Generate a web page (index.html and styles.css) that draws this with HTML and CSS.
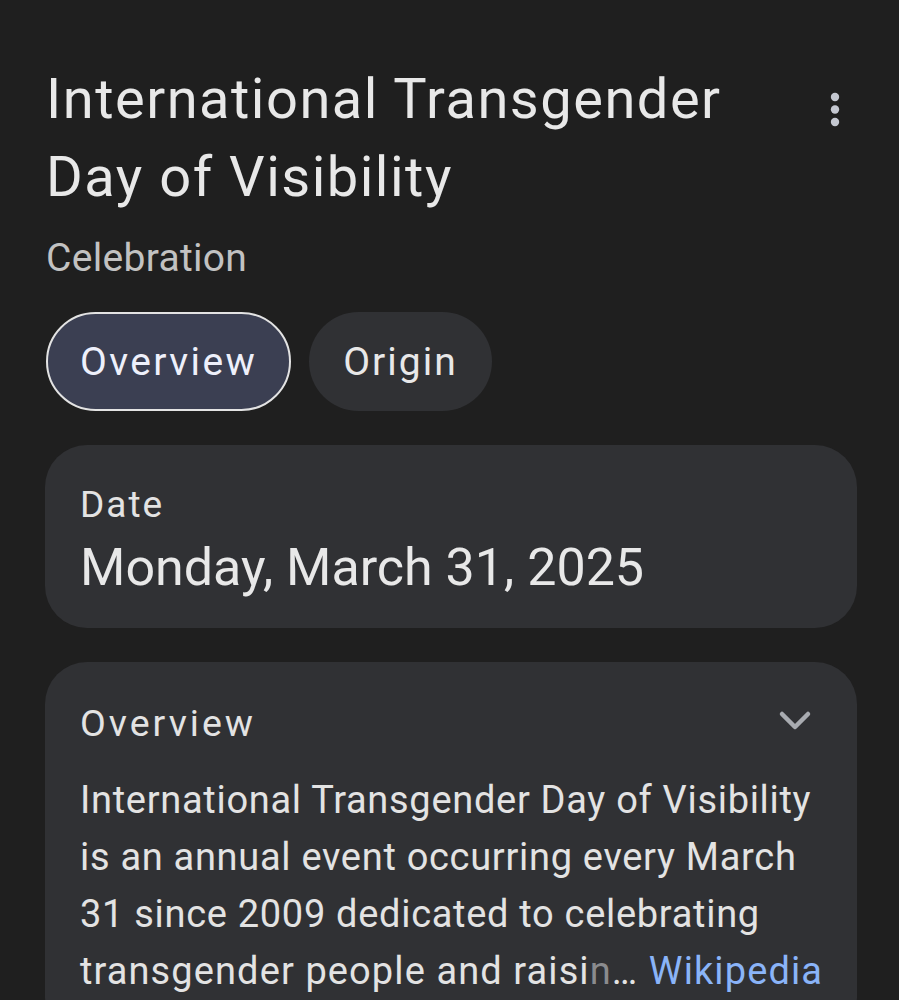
FILE: index.html
```html
<!DOCTYPE html>
<html lang="en">
<head>
    <meta charset="UTF-8">
    <meta name="viewport" content="width=device-width, initial-scale=1.0">
    <title>International Transgender Day of Visibility</title>
    <link rel="stylesheet" href="styles.css">
</head>
<body>
    <div class="panel">
        <div class="panel-header">
            <h1 class="event-title">International Transgender Day of Visibility</h1>
            <button class="more-btn" aria-label="More options">
                <svg width="12" height="40" viewBox="0 0 12 40">
                    <circle cx="6" cy="7" r="4.2"/>
                    <circle cx="6" cy="19.5" r="4.2"/>
                    <circle cx="6" cy="32" r="4.2"/>
                </svg>
            </button>
        </div>
        <div class="event-type">Celebration</div>

        <div class="tabs">
            <button class="tab tab-active">Overview</button>
            <button class="tab">Origin</button>
        </div>

        <div class="card date-card">
            <div class="date-label">Date</div>
            <div class="date-value">Monday, March 31, 2025</div>
        </div>

        <div class="card overview-card">
            <div class="overview-head">
                <div class="overview-title">Overview</div>
                <svg class="chevron" width="36" height="24" viewBox="0 0 36 24">
                    <path d="M5 5 L18 18 L31 5" fill="none" stroke-width="4.5" stroke-linecap="round" stroke-linejoin="round"/>
                </svg>
            </div>
            <p class="overview-text">International Transgender Day of Visibility is an annual event occurring every March 31 since 2009 dedicated to celebrating <span class="last-line">transgender people and raisi<span class="fade">n</span>&hellip; <a href="#" class="source-link">Wikipedia</a></span></p>
        </div>
    </div>
</body>
</html>
```

FILE: styles.css
```css
* {
    margin: 0;
    padding: 0;
    box-sizing: border-box;
}

body {
    font-family: Roboto, "Liberation Sans", sans-serif;
    background: #1f1f1f;
    color: #e3e3e3;
    min-height: 100vh;
}

.panel {
    padding: 60px 44px 0 46px;
}

.panel-header {
    display: flex;
    justify-content: space-between;
    align-items: flex-start;
}

.event-title {
    font-size: 56px;
    font-weight: 400;
    line-height: 78px;
    color: #e8e8e8;
    max-width: 730px;
    letter-spacing: 1.5px;
}

.more-btn {
    background: none;
    border: none;
    margin-top: 30px;
    margin-right: 14px;
    fill: #c4c7d0;
}

.event-type {
    font-size: 39px;
    line-height: 48px;
    color: #c2c2c2;
    margin-top: 18px;
    letter-spacing: 0.3px;
}

.tabs {
    display: flex;
    gap: 18px;
    margin-top: 30px;
}

.tab {
    font-family: inherit;
    font-size: 39px;
    height: 99px;
    padding: 0 34px;
    border-radius: 50px;
    border: none;
    background: #303134;
    color: #e8e8e8;
    letter-spacing: 2px;
}

.tab-active {
    background: #3b3f52;
    border: 2px solid #e3e3e3;
    padding: 0 32px;
    color: #eef0fb;
    letter-spacing: 2.4px;
}

.card {
    background: #303134;
    border-radius: 42px;
    margin-top: 34px;
    margin-right: -2px;
    margin-left: -1px;
}

.date-card {
    padding: 38px 35px 30px;
}

.date-label {
    font-size: 37px;
    line-height: 44px;
    color: #e3e3e3;
    letter-spacing: 2px;
}

.date-value {
    font-size: 52px;
    line-height: 60px;
    margin-top: 11px;
    color: #e8e8e8;
}

.overview-card {
    padding: 37px 35px 40px;
}

.overview-head {
    display: flex;
    justify-content: space-between;
    align-items: center;
}

.overview-title {
    font-size: 37.5px;
    line-height: 48px;
    color: #e3e3e3;
    letter-spacing: 3px;
}

.chevron {
    stroke: #a8abb0;
    margin-right: 9px;
    margin-top: -4px;
}

.overview-text {
    font-size: 38px;
    line-height: 57px;
    margin-top: 25px;
    color: #e3e3e3;
    letter-spacing: 0.7px;
}

.last-line {
    white-space: nowrap;
    letter-spacing: 1.1px;
}

.fade {
    color: #8a8b8e;
}

.source-link {
    color: #8ab4f8;
    text-decoration: none;
}
```
